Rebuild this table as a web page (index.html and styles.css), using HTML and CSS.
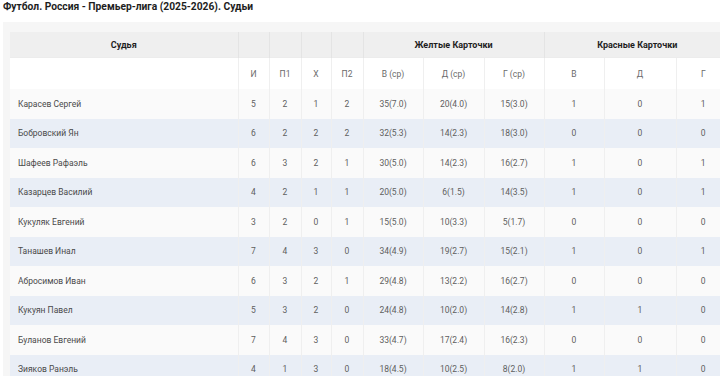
FILE: index.html
```html
<!DOCTYPE html>
<html lang="ru">
<head>
<meta charset="utf-8">
<link rel="stylesheet" href="styles.css">
</head>
<body>
<div class="page">
<h1 class="title">Футбол. Россия - Премьер-лига (2025-2026). Судьи</h1>
<div class="card">
<table class="refs">
<colgroup>
<col class="c-name"><col class="c-s"><col class="c-s2"><col class="c-s3"><col class="c-s2">
<col class="c-y"><col class="c-y2"><col class="c-y"><col class="c-y"><col class="c-r2"><col class="c-r3">
</colgroup>
<thead>
<tr class="h1">
<th>Судья</th><th></th><th></th><th></th><th></th>
<th colspan="3">Желтые Карточки</th>
<th colspan="3">Красные Карточки</th>
</tr>
<tr class="h2">
<th></th><th>И</th><th>П1</th><th>Х</th><th>П2</th>
<th>В (ср)</th><th>Д (ср)</th><th>Г (ср)</th><th>В</th><th>Д</th><th>Г</th>
</tr>
</thead>
<tbody>
<tr><td>Карасев Сергей</td><td>5</td><td>2</td><td>1</td><td>2</td><td>35(7.0)</td><td>20(4.0)</td><td>15(3.0)</td><td>1</td><td>0</td><td>1</td></tr>
<tr><td>Бобровский Ян</td><td>6</td><td>2</td><td>2</td><td>2</td><td>32(5.3)</td><td>14(2.3)</td><td>18(3.0)</td><td>0</td><td>0</td><td>0</td></tr>
<tr><td>Шафеев Рафаэль</td><td>6</td><td>3</td><td>2</td><td>1</td><td>30(5.0)</td><td>14(2.3)</td><td>16(2.7)</td><td>1</td><td>0</td><td>1</td></tr>
<tr><td>Казарцев Василий</td><td>4</td><td>2</td><td>1</td><td>1</td><td>20(5.0)</td><td>6(1.5)</td><td>14(3.5)</td><td>1</td><td>0</td><td>1</td></tr>
<tr><td>Кукуляк Евгений</td><td>3</td><td>2</td><td>0</td><td>1</td><td>15(5.0)</td><td>10(3.3)</td><td>5(1.7)</td><td>0</td><td>0</td><td>0</td></tr>
<tr><td>Танашев Инал</td><td>7</td><td>4</td><td>3</td><td>0</td><td>34(4.9)</td><td>19(2.7)</td><td>15(2.1)</td><td>1</td><td>0</td><td>1</td></tr>
<tr><td>Абросимов Иван</td><td>6</td><td>3</td><td>2</td><td>1</td><td>29(4.8)</td><td>13(2.2)</td><td>16(2.7)</td><td>0</td><td>0</td><td>0</td></tr>
<tr><td>Кукуян Павел</td><td>5</td><td>3</td><td>2</td><td>0</td><td>24(4.8)</td><td>10(2.0)</td><td>14(2.8)</td><td>1</td><td>1</td><td>0</td></tr>
<tr><td>Буланов Евгений</td><td>7</td><td>4</td><td>3</td><td>0</td><td>33(4.7)</td><td>17(2.4)</td><td>16(2.3)</td><td>0</td><td>0</td><td>0</td></tr>
<tr><td>Зияков Ранэль</td><td>4</td><td>1</td><td>3</td><td>0</td><td>18(4.5)</td><td>10(2.5)</td><td>8(2.0)</td><td>1</td><td>1</td><td>0</td></tr>
</tbody>
</table>
</div>
</div>
</body>
</html>
```
FILE: styles.css
```css
html, body {
  margin: 0;
  padding: 0;
  background: #ffffff;
  font-family: Roboto, "Noto Sans", sans-serif;
}
.page {
  width: 720px;
  height: 376px;
  overflow: hidden;
}
.title {
  margin: 0;
  padding: 0 3px;
  font-size: 10.25px;
  line-height: 14px;
  font-weight: 700;
  color: #1e1e1e;
  white-space: nowrap;
}
.card {
  margin: 8px 0 0 3px;
  width: 717px;
  height: 360px;
  overflow: hidden;
  padding: 10px 0 0 7px;
  background: #f6f6f6;
  box-sizing: border-box;
}
.refs {
  width: 720px;
  table-layout: fixed;
  border-collapse: collapse;
  font-size: 8.5px;
}
.c-name { width: 228px; }
.c-s { width: 31px; }
.c-s2 { width: 32px; }
.c-s3 { width: 30px; }
.c-y { width: 60px; }
.c-y2 { width: 61px; }
.c-r2 { width: 72px; }
.c-r3 { width: 54px; }
.refs th, .refs td {
  padding: 0;
  text-align: center;
  border-left: 1px solid #efefef;
  white-space: nowrap;
}
.refs th:first-child, .refs td:first-child {
  border-left: none;
}
.h1 th {
  height: 25px;
  background: #efefef;
  font-weight: 700;
  font-size: 9px;
  color: #1e1e1e;
  border-left-color: #e4e4e4;
}
.h2 th {
  height: 31px;
  background: #ffffff;
  font-weight: 400;
  color: #6a6a6a;
  border-top: 1px solid #ececec;
}
.refs tbody td {
  height: 29.5px;
  color: #5e5e5e;
  background: #fafafa;
}
.refs tbody tr:nth-child(even) td {
  background: #e9eef6;
}
.refs tbody td:first-child {
  text-align: left;
  padding-left: 8px;
  color: #4a4a4a;
}
```
